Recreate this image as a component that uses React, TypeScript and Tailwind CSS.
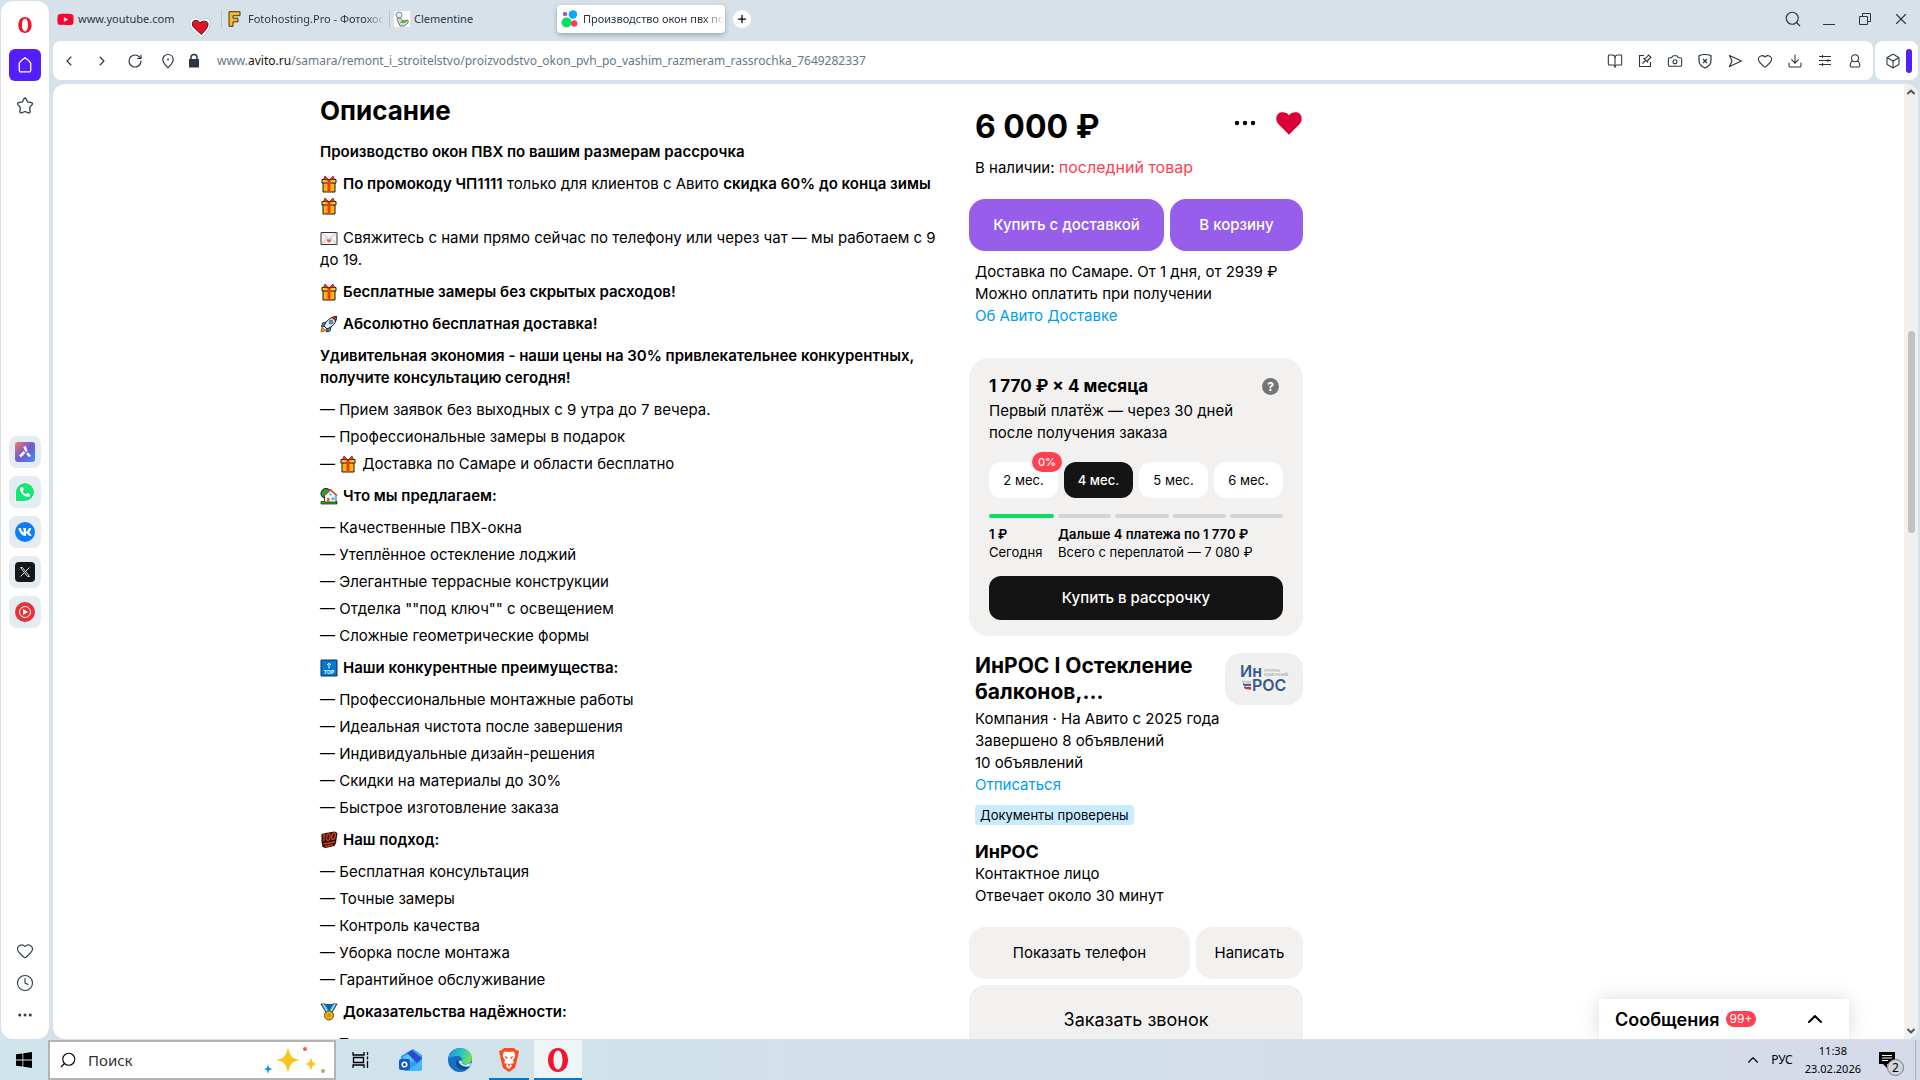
import type { ReactNode } from "react";
import { FaPhoneAlt, FaVk, FaYoutube } from "react-icons/fa";
import {
    BookOpen,
    Box,
    Camera,
    ChevronDown,
    ChevronLeft,
    ChevronRight,
    ChevronUp,
    Clock,
    Download,
    Ellipsis,
    Heart,
    Plus,
    RotateCw,
    Search,
    X,
} from "lucide-react";

const emojiClass = "mr-[5px] inline-block size-[18px] align-[-4px]";

function Gift() {
    return (
        <svg viewBox="0 0 18 18" className={emojiClass} role="img" aria-label="Подарок">
            <path d="M3 7h12v10H3z" fill="#fcb50d" stroke="#1a1a1a" />
            <path d="M2 4.500h14V8H2z" fill="#ffc83d" stroke="#1a1a1a" />
            <path d="M7.500 5h3v12h-3z" fill="#f03a17" />
            <path d="M9 5 5 1 3.500 4.500zM9 5l4-4 1.500 3.500z" fill="#f03a17" stroke="#7a1708" strokeWidth=".7" />
        </svg>
    );
}

function Letter() {
    return (
        <svg viewBox="0 0 18 18" className={emojiClass} role="img" aria-label="Письмо">
            <path d="M1 3.500h16v12H1z" fill="#f2f2f2" stroke="#333" />
            <path d="m1.500 4 7.500 6 7.500-6M1.500 15 7 9m9.500 6L11 9" fill="none" stroke="#c4c4c4" />
            <path d="M9 13.800c-4-2.500-1.500-4.500 0-3 1.500-1.500 4 .5 0 3z" fill="#f05a4a" />
        </svg>
    );
}

function Rocket() {
    return (
        <svg viewBox="0 0 18 18" className={emojiClass} role="img" aria-label="Ракета">
            <path d="M2 12.500 1 17l5-1.500z" fill="#f9a11b" stroke="#8a3a08" strokeWidth=".7" />
            <path d="M6 7 2.500 8 1.500 12l4-1zM11 12l-1 4-3.500 1 .5-4z" fill="#2d9fe0" stroke="#111" strokeWidth=".8" />
            <path d="M4 11c2-5 6-9 12.500-9.500C16.500 8 12 12 7 14z" fill="#e8eef2" stroke="#111" />
            <path d="M12 2.700c1.500-.8 3-1.100 4.500-1.200 0 1.500-.4 3-1 4.500z" fill="#e02a20" stroke="#111" strokeWidth=".6" />
            <circle cx="11" cy="7" r="1.900" fill="#45b8ef" stroke="#234" strokeWidth=".7" />
        </svg>
    );
}

function HouseTree() {
    return (
        <svg viewBox="0 0 18 18" className={emojiClass} role="img" aria-label="Дом">
            <circle cx="6" cy="6.500" r="5" fill="#16a637" stroke="#111" />
            <path d="M1 14.500h16v2.500H1z" fill="#16c60c" stroke="#111" strokeWidth=".7" />
            <path d="M4.500 8.500 10.500 3 16 8.500V15H4.500z" fill="#f3f3f3" stroke="#111" strokeWidth=".7" />
            <path d="m4 8.500 6.500-6 6.500 6" fill="none" stroke="#df3b2b" strokeWidth="1.200" />
            <path d="M7 11h2.500v4H7z" fill="#e4593b" />
            <path d="M11.500 10.500h3v2.500h-3zM9.500 6.500h2v2h-2z" fill="#42b8ef" />
        </svg>
    );
}

function TopArrow() {
    return (
        <svg viewBox="0 0 18 18" className={emojiClass} role="img" aria-label="TOP">
            <path d="M1 1h16v16H1z" fill="#0078d7" stroke="#10304e" />
            <path d="M9 9.500V4M7 6l2-2 2 2" fill="none" stroke="#fff" />
            <text x="9" y="15" fontSize="5" fontWeight="700" textAnchor="middle" fill="#fff">
                TOP
            </text>
        </svg>
    );
}

function Hundred() {
    return (
        <svg viewBox="0 0 18 18" className={emojiClass} role="img" aria-label="Сто баллов">
            <path d="m1.500 3 4-1 9-1.500 3 1.500-1.500 10-1.500 3-9 2-3-1-.5-3-.5-2z" fill="#251210" />
            <g fill="none" stroke="#e23b1c" strokeWidth="1.300">
                <path d="m3 5 1.500-1.500L3.700 10.500" />
                <ellipse cx="8.300" cy="6.200" rx="1.700" ry="3.300" transform="rotate(12 8.300 6.200)" />
                <ellipse cx="13.500" cy="5.200" rx="1.700" ry="3.300" transform="rotate(12 13.500 5.200)" />
                <path d="M3.500 13 15 11M5 15.300l8-1.500" />
            </g>
        </svg>
    );
}

function Medal() {
    return (
        <svg viewBox="0 0 18 18" className={emojiClass} role="img" aria-label="Медаль">
            <path d="M1 1h4.500L9 7l3.500-6H17l-5.500 9h-5z" fill="#31b5ef" stroke="#111" strokeWidth=".8" />
            <path d="M5.500 1h7L9 7z" fill="#0063b1" />
            <path d="m3 1 4.500 8M15 1l-4.500 8" stroke="#d6f0fb" />
            <circle cx="9" cy="12.500" r="4.500" fill="#f9b50d" stroke="#3b2a00" strokeWidth=".8" />
            <circle cx="9" cy="12.500" r="2.300" fill="#e09100" />
        </svg>
    );
}

function OperaLogo({ className }: { className: string }) {
    return (
        <svg viewBox="0 0 24 24" className={className} aria-hidden="true">
            <path
                fillRule="evenodd"
                fill="#f5152b"
                d="M12 0c6.200 0 10 5.400 10 12s-3.800 12-10 12S2 18.600 2 12 5.800 0 12 0zm0 2.600c-2.800 0-4.500 4-4.500 9.400s1.700 9.400 4.500 9.400 4.500-4 4.500-9.400-1.700-9.400-4.500-9.400z"
            />
        </svg>
    );
}

function AvitoLogo() {
    return (
        <svg viewBox="0 0 18 18" className="size-[18px] shrink-0" aria-hidden="true">
            <circle cx="5.500" cy="12.500" r="5" fill="#04e061" />
            <circle cx="12" cy="4.500" r="4.200" fill="#00aaff" />
            <circle cx="13.200" cy="13.500" r="3.200" fill="#ff4053" />
            <circle cx="4" cy="4" r="2.300" fill="#965eeb" />
        </svg>
    );
}

type Block = { icon: ReactNode; title: string; items: string[] };

const blocks: Block[] = [
    {
        icon: <HouseTree />,
        title: "Что мы предлагаем:",
        items: [
            "Качественные ПВХ-окна",
            "Утеплённое остекление лоджий",
            "Элегантные террасные конструкции",
            'Отделка ""под ключ"" с освещением',
            "Сложные геометрические формы",
        ],
    },
    {
        icon: <TopArrow />,
        title: "Наши конкурентные преимущества:",
        items: [
            "Профессиональные монтажные работы",
            "Идеальная чистота после завершения",
            "Индивидуальные дизайн-решения",
            "Скидки на материалы до 30%",
            "Быстрое изготовление заказа",
        ],
    },
    {
        icon: <Hundred />,
        title: "Наш подход:",
        items: [
            "Бесплатная консультация",
            "Точные замеры",
            "Контроль качества",
            "Уборка после монтажа",
            "Гарантийное обслуживание",
        ],
    },
    {
        icon: <Medal />,
        title: "Доказательства надёжности:",
        items: ["Тысячи довольных клиентов"],
    },
];

function Description() {
    return (
        <article className="flex flex-col gap-[10px] whitespace-nowrap pt-[10px] text-[15px] leading-[22px]">
            <h2 className="mb-[3px] text-[26px] font-bold leading-[34px]">Описание</h2>
            <p className="font-semibold">Производство окон ПВХ по вашим размерам рассрочка</p>
            <p>
                <Gift />
                <strong className="font-semibold">По промокоду ЧП1111</strong> только для клиентов с Авито{" "}
                <strong className="font-semibold">скидка 60% до конца зимы</strong>
                <br />
                <Gift />
            </p>
            <p>
                <Letter />
                Свяжитесь с нами прямо сейчас по телефону или через чат — мы работаем с 9<br />
                до 19.
            </p>
            <p className="font-semibold">
                <Gift />
                Бесплатные замеры без скрытых расходов!
            </p>
            <p className="font-semibold">
                <Rocket />
                Абсолютно бесплатная доставка!
            </p>
            <p className="font-semibold">
                Удивительная экономия - наши цены на 30% привлекательнее конкурентных,
                <br />
                получите консультацию сегодня!
            </p>
            <ul className="flex flex-col gap-[5px]">
                <li>— Прием заявок без выходных с 9 утра до 7 вечера.</li>
                <li>— Профессиональные замеры в подарок</li>
                <li>
                    — <Gift />
                    Доставка по Самаре и области бесплатно
                </li>
            </ul>
            {blocks.map((block) => (
                <section key={block.title} className="flex flex-col gap-[10px]">
                    <h3 className="font-semibold">
                        {block.icon}
                        {block.title}
                    </h3>
                    <ul className="flex flex-col gap-[5px]">
                        {block.items.map((item) => (
                            <li key={item}>— {item}</li>
                        ))}
                    </ul>
                </section>
            ))}
        </article>
    );
}

function Installments() {
    return (
        <section className="mt-[31px] rounded-[20px] bg-[#f2f1f0] px-5 pb-4 pt-4">
            <div className="flex items-center justify-between">
                <h3 className="text-[17px] font-bold leading-6">1 770 ₽ × 4 месяца</h3>
                <button
                    type="button"
                    aria-label="Подробнее"
                    className="mr-1 size-[17px] rounded-full bg-[#757575] text-[12px] font-bold leading-[17px] text-white"
                >
                    ?
                </button>
            </div>
            <p className="mt-[2px] text-[15px] leading-[22px]">
                Первый платёж — через 30 дней
                <br />
                после получения заказа
            </p>
            <div className="mt-[18px] grid grid-cols-4 gap-[6px] text-[13px]">
                <button type="button" className="relative h-9 rounded-xl bg-white">
                    2 мес.
                    <span className="absolute -right-1 -top-[10px] rounded-full bg-[#ff4053] px-[6px] text-[11px] font-medium leading-5 text-white">
                        0%
                    </span>
                </button>
                <button type="button" className="h-9 rounded-xl bg-[#141414] font-medium text-white">
                    4 мес.
                </button>
                <button type="button" className="h-9 rounded-xl bg-white">
                    5 мес.
                </button>
                <button type="button" className="h-9 rounded-xl bg-white">
                    6 мес.
                </button>
            </div>
            <div className="mt-4 flex gap-1">
                <span className="h-1 w-[65px] rounded-full bg-[#04e061]" />
                <span className="h-1 flex-1 rounded-full bg-[#d4d4d4]" />
                <span className="h-1 flex-1 rounded-full bg-[#d4d4d4]" />
                <span className="h-1 flex-1 rounded-full bg-[#d4d4d4]" />
                <span className="h-1 flex-1 rounded-full bg-[#d4d4d4]" />
            </div>
            <div className="mt-[7px] flex gap-1 text-[13px] leading-[18px]">
                <p className="w-[65px]">
                    <strong className="font-semibold">1 ₽</strong>
                    <br />
                    Сегодня
                </p>
                <p>
                    <strong className="font-semibold">Дальше 4 платежа по 1 770 ₽</strong>
                    <br />
                    Всего с переплатой — 7 080 ₽
                </p>
            </div>
            <button
                type="button"
                className="mt-[15px] h-11 w-full rounded-xl bg-[#141414] text-[15px] font-medium text-white"
            >
                Купить в рассрочку
            </button>
        </section>
    );
}

function SellerLogo() {
    return (
        <div className="flex h-[52px] w-[78px] items-center justify-center rounded-2xl bg-[#efefef]">
            <svg viewBox="0 0 52 30" className="h-[30px] w-[52px]" role="img" aria-label="ИнРОС">
                <path d="M2 0h48v30H2z" fill="#f1f1ee" />
                <text x="2" y="13" fontSize="16" fontWeight="600" fill="#35588f">
                    Ин
                </text>
                <text x="26" y="8" fontSize="4" fill="#8a8f96">
                    ГРУППА
                </text>
                <text x="26" y="12" fontSize="4" fill="#8a8f96">
                    КОМПАНИЙ
                </text>
                <text x="14" y="27" fontSize="16" fontWeight="600" fill="#35588f">
                    РОС
                </text>
                <path d="M4 16c3 2 6 0 9 1v2c-4-1-6 1-9-1z" fill="#c6ccd4" />
                <path d="M5 19c3 2 5 0 8 1v2c-3-1-5 1-8-1z" fill="#35588f" />
                <path d="M6 22c3 2 5 0 7 1v3c-2-1-5 0-7-2z" fill="#c23a45" />
            </svg>
        </div>
    );
}

function Purchase() {
    return (
        <aside className="text-[15px] leading-[22px]">
            <div className="flex items-center justify-between pl-[6px] pt-[22px]">
                <p className="text-[32px] font-bold leading-[42px]">6 000 ₽</p>
                <div className="mb-2 flex items-center gap-4">
                    <button type="button" aria-label="Ещё">
                        <svg viewBox="0 0 28 28" className="size-7">
                            <circle cx="6" cy="14" r="2.200" />
                            <circle cx="14" cy="14" r="2.200" />
                            <circle cx="22" cy="14" r="2.200" />
                        </svg>
                    </button>
                    <button type="button" aria-label="В избранном">
                        <svg viewBox="0 0 28 28" className="size-7" fill="#db0036">
                            <path d="M14 6.500C11.600 2.200 1.300 1.300 1.300 10c0 3 2 5 4 7l8.700 8.700L22.700 17c2-2 4-4 4-7 0-8.700-10.300-7.800-12.700-3.500z" />
                        </svg>
                    </button>
                </div>
            </div>
            <p className="mt-2 pl-[6px]">
                В наличии: <span className="text-base leading-[22px] text-[#ff4053]">последний товар</span>
            </p>
            <div className="mt-5 flex gap-[6px] font-medium text-white">
                <button type="button" className="h-[52px] w-[195px] rounded-2xl bg-[#965eeb]">
                    Купить с доставкой
                </button>
                <button type="button" className="h-[52px] flex-1 rounded-2xl bg-[#965eeb]">
                    В корзину
                </button>
            </div>
            <p className="mt-[10px] pl-[6px]">
                Доставка по Самаре. От 1 дня, от 2939 ₽
                <br />
                Можно оплатить при получении
                <br />
                <a href="#delivery" className="text-[#009cf0]">
                    Об Авито Доставке
                </a>
            </p>
            <Installments />
            <div className="mt-[17px] flex items-start justify-between pl-[6px]">
                <h2 className="w-[230px] text-[21px] font-bold leading-[26px]">ИнРОС I Остекление балконов,…</h2>
                <SellerLogo />
            </div>
            <p className="mt-[3px] pl-[6px]">
                Компания · На Авито с 2025 года
                <br />
                Завершено 8 объявлений
                <br />
                10 объявлений
                <br />
                <a href="#unsubscribe" className="text-[#009cf0]">
                    Отписаться
                </a>
            </p>
            <p className="ml-[6px] mt-[9px] w-fit rounded bg-[#c9ebff] px-[5px] text-[13px] leading-5">
                Документы проверены
            </p>
            <h3 className="mt-4 pl-[6px] text-[18px] font-bold leading-[22px]">ИнРОС</h3>
            <p className="pl-[6px]">
                Контактное лицо
                <br />
                Отвечает около 30 минут
            </p>
            <div className="mt-5 flex gap-[6px] text-[15px]">
                <button type="button" className="h-[52px] w-[221px] rounded-2xl bg-[#f2f1f0]">
                    Показать телефон
                </button>
                <button type="button" className="h-[52px] flex-1 rounded-2xl bg-[#f2f1f0]">
                    Написать
                </button>
            </div>
            <button type="button" className="mt-[6px] h-[70px] w-full rounded-2xl bg-[#f2f1f0] text-[18px]">
                Заказать звонок
            </button>
        </aside>
    );
}

function SidebarApp({ label, children }: { label: string; children: ReactNode }) {
    return (
        <button
            type="button"
            aria-label={label}
            className="flex size-8 items-center justify-center rounded-lg bg-[#e4ebf1]"
        >
            {children}
        </button>
    );
}

function Sidebar() {
    return (
        <nav className="ml-px mr-1 mt-px flex w-12 shrink-0 flex-col items-center rounded-xl bg-white text-[#2e3b47]">
            <OperaLogo className="mt-4 size-4" />
            <button
                type="button"
                aria-label="Экспресс-панель"
                className="mt-4 flex size-8 items-center justify-center rounded-md bg-[#541fff] text-white"
            >
                <svg viewBox="0 0 16 16" className="size-4" fill="none" stroke="currentColor" strokeWidth="1.300">
                    <path d="M8 .8c2 1.300 4 3 5.700 5.200v7.500q0 1.300-1.300 1.300H3.600q-1.300 0-1.300-1.300V6C4 3.800 6 2.100 8 .8z" />
                </svg>
            </button>
            <button type="button" aria-label="Закладки" className="mt-4">
                <svg viewBox="0 0 18 18" className="size-[18px]" fill="none" stroke="currentColor" strokeWidth="1.300">
                    <path
                        strokeLinejoin="round"
                        d="M8 1.800q1-1.600 2 0l1.600 3 3.900.9q1.600.6.600 1.900l-2.400 2.800.4 4.200q-.1 1.700-1.700 1.200L9 14.500l-3.400 1.300q-1.600.5-1.700-1.200l.4-4.200-2.400-2.800q-1-1.300.6-1.900l3.900-.9z"
                    />
                </svg>
            </button>
            <div className="mt-[321px] flex flex-col gap-2">
                <SidebarApp label="Aria">
                    <svg viewBox="0 0 20 20" className="size-5">
                        <defs>
                            <linearGradient id="aria" x1="0" y1="0" x2="1" y2="1">
                                <stop offset="0" stopColor="#f47b57" />
                                <stop offset=".5" stopColor="#7058d8" />
                                <stop offset="1" stopColor="#3b91e8" />
                            </linearGradient>
                        </defs>
                        <rect width="20" height="20" rx="3" fill="url(#aria)" />
                        <path d="M5 14.500 9.500 10M9.500 4.500l2 5m.5 1.500 3 3.500" stroke="#fff" strokeWidth="2.500" />
                    </svg>
                </SidebarApp>
                <SidebarApp label="WhatsApp">
                    <span className="flex size-5 items-center justify-center rounded-full rounded-bl-sm border border-white bg-[#12e676]">
                        <FaPhoneAlt size={10} color="#fff" />
                    </span>
                </SidebarApp>
                <SidebarApp label="ВКонтакте">
                    <span className="flex size-5 items-center justify-center rounded-full bg-[#0a7cff]">
                        <FaVk size={14} color="#fff" />
                    </span>
                </SidebarApp>
                <SidebarApp label="X">
                    <svg viewBox="0 0 20 20" className="size-5">
                        <rect width="20" height="20" rx="4" fill="#14181b" />
                        <path d="M5.500 5.500h2l7 9h-2zM14.500 5.500l-9 9" fill="none" stroke="#d8dcdf" />
                    </svg>
                </SidebarApp>
                <SidebarApp label="YouTube Music">
                    <svg viewBox="0 0 20 20" className="size-5">
                        <circle cx="10" cy="10" r="10" fill="#e53238" />
                        <circle cx="10" cy="10" r="5.500" fill="none" stroke="#fff" />
                        <path d="m8 7 5 3-5 3z" fill="#fff" />
                    </svg>
                </SidebarApp>
            </div>
            <div className="mb-[15px] mt-auto flex flex-col items-center gap-[14px]">
                <Heart size={18} strokeWidth={1.5} />
                <Clock size={18} strokeWidth={1.5} />
                <Ellipsis size={18} strokeWidth={2} />
            </div>
        </nav>
    );
}

function TabBar() {
    return (
        <header className="flex h-[41px] items-start text-[11px] text-[#2a3641]">
            <div className="relative mt-[5px] flex h-7 w-[168px] items-center gap-1 pl-1">
                <FaYoutube size={17} color="#ff0033" />
                www.youtube.com
                <svg viewBox="0 0 24 24" className="absolute right-2 top-[11px] size-6">
                    <path
                        d="M3 2.500c3-2.500 7-.5 8.500 1.500 4-3 9-1.500 10 2 1 5-5 12-8.500 16.500-4-4-8-6-11-10.500C0 8 .5 4.500 3 2.500z"
                        fill="#fff"
                        stroke="#c5c9cd"
                    />
                    <path
                        d="M4 5.500c2-2 6-1 7 1.500 2.500-3 7.500-2 8 .5.500 4-4 8-6.500 11-3-3-6-5-8.500-8-.8-2-1-3.500 0-5z"
                        fill="#e3142a"
                        stroke="#4c0a10"
                    />
                </svg>
            </div>
            <div className="mt-[5px] flex h-7 w-[168px] items-center gap-[5px] pr-1">
                <span className="h-[18px] w-px bg-[#bcc7d0]" />
                <svg viewBox="0 0 16 16" className="size-4 shrink-0">
                    <path d="M2 .7h11v4H6v2.500h5v3.600H6v4.500H2z" fill="#fbb829" stroke="#4a3208" />
                </svg>
                <span className="flex-1 overflow-hidden whitespace-nowrap [mask-image:linear-gradient(to_right,black_85%,transparent)]">
                    Fotohosting.Pro - Фотохостинг
                </span>
            </div>
            <div className="mt-[5px] flex h-7 w-[168px] items-center gap-1">
                <span className="h-[18px] w-px bg-[#bcc7d0]" />
                <svg viewBox="0 0 16 16" className="size-4 shrink-0">
                    <path d="M0 0h16v16H0z" fill="#fff" />
                    <circle cx="5" cy="4" r="3" fill="#e7e7ef" stroke="#8b8798" />
                    <path d="M3 8c2-2 5 0 6 2l5-1v3l-4 3H6z" fill="#d9ddd2" stroke="#6f7a68" />
                    <path d="m8 9 5 1-2 2H6z" fill="#57b847" />
                </svg>
                Clementine
            </div>
            <div className="mt-[5px] flex h-7 w-[168px] items-center gap-1 rounded bg-white pl-1 shadow-[0_2px_5px_rgba(60,80,100,0.4)]">
                <AvitoLogo />
                <span className="flex-1 overflow-hidden whitespace-nowrap [mask-image:linear-gradient(to_right,black_85%,transparent)]">
                    Производство окон пвх по вашим
                </span>
            </div>
            <button
                type="button"
                aria-label="Новая вкладка"
                className="ml-2 mt-[10px] flex size-[18px] items-center justify-center rounded-full bg-white text-black"
            >
                <Plus size={12} strokeWidth={2.5} />
            </button>
            <div className="ml-auto mr-[10px] mt-[10px] flex gap-[18px] text-[#333]">
                <Search size={18} strokeWidth={1.5} />
                <svg viewBox="0 0 18 18" className="size-[18px]" stroke="currentColor">
                    <path d="M3 14.500h12" />
                </svg>
                <svg viewBox="0 0 18 18" className="size-[18px]" fill="none" stroke="currentColor">
                    <path d="M3.500 6.500h8v8h-8zM6.500 6.500v-3h8v8h-3" />
                </svg>
                <X size={18} strokeWidth={1.5} />
            </div>
        </header>
    );
}

function AddressBar() {
    return (
        <div className="mr-[2px] flex h-[39px] gap-[2px] text-[#2a3641]">
            <div className="flex flex-1 items-center rounded-lg bg-white pl-2 pr-[10px]">
                <div className="flex gap-[17px]">
                    <ChevronLeft size={16} strokeWidth={1.7} />
                    <ChevronRight size={16} strokeWidth={1.7} />
                    <RotateCw size={16} strokeWidth={1.7} />
                    <svg viewBox="0 0 16 16" className="size-4" fill="none" stroke="currentColor" strokeWidth="1.200">
                        <path d="M8 1.500c3 0 5.200 2.200 5.200 5 0 3.500-3 6-5.200 8.300-2.200-2.300-5.200-4.800-5.200-8.300 0-2.800 2.200-5 5.200-5z" />
                        <circle cx="8" cy="6.500" r="1" fill="currentColor" stroke="none" />
                    </svg>
                </div>
                <svg viewBox="0 0 16 16" className="ml-[10px] size-4" fill="currentColor">
                    <path d="M3 6h10v8.500H3z" />
                    <path d="M5 7V4.500a3 3 0 0 1 6 0V7" fill="none" stroke="currentColor" strokeWidth="1.500" />
                </svg>
                <p className="ml-[15px] flex-1 text-[12px] text-[#667885]">
                    www.<span className="text-[#111]">avito.ru</span>
                    /samara/remont_i_stroitelstvo/proizvodstvo_okon_pvh_po_vashim_razmeram_rassrochka_7649282337
                </p>
                <div className="flex gap-[14px]">
                    <BookOpen size={16} strokeWidth={1.6} />
                    <svg viewBox="0 0 16 16" className="size-4" fill="none" stroke="currentColor" strokeWidth="1.100">
                        <path d="M7 2.500H2.500v11h11V9M5.500 10.500l3-3M7 5.500 10.500 9l.7-2.300 2.800-2.200-2.500-2.500-2.200 2.800z" />
                    </svg>
                    <Camera size={16} strokeWidth={1.6} />
                    <svg viewBox="0 0 16 16" className="size-4" fill="none" stroke="currentColor" strokeWidth="1.200">
                        <path d="M8 1.500c2 0 4 .3 6 1.300v4.700c0 4-2.500 6-6 7.500-3.500-1.500-6-3.500-6-7.500V2.800c2-1 4-1.300 6-1.300z" />
                        <path d="m6 6 4 4m0-4-4 4" />
                    </svg>
                    <svg viewBox="0 0 16 16" className="size-4" fill="none" stroke="currentColor" strokeWidth="1.200">
                        <path strokeLinejoin="round" d="m2.500 2.500 12 5.500-12 5.500L5 8z" />
                    </svg>
                    <Heart size={16} strokeWidth={1.6} />
                    <Download size={16} strokeWidth={1.6} />
                    <svg viewBox="0 0 16 16" className="size-4" fill="none" stroke="currentColor" strokeWidth="1.100">
                        <path d="M2 3.500h12M2 7.500h12M2 11.500h12M5.500 2v3M11 6v3M5.500 10v3" />
                    </svg>
                    <svg viewBox="0 0 16 16" className="size-4" fill="none" stroke="currentColor" strokeWidth="1.100">
                        <circle cx="8" cy="5.200" r="3.500" />
                        <path d="M5.500 8c-2.300 1-3 5-1.500 6h8c1.500-1 .8-5-1.500-6" />
                    </svg>
                </div>
            </div>
            <div className="flex w-[43px] items-center justify-between rounded-lg bg-white pl-[10px] pr-[6px]">
                <Box size={16} strokeWidth={1.6} />
                <span className="h-6 w-[6px] rounded-full bg-[#541fff]" />
            </div>
        </div>
    );
}

function Taskbar() {
    return (
        <footer className="flex h-10 shrink-0 items-center bg-linear-to-r from-[#cfe5ec] to-[#d5dae8] text-black">
            <button type="button" aria-label="Пуск" className="flex h-10 w-12 items-center justify-center">
                <svg viewBox="0 0 16 16" className="size-4">
                    <path d="m0 2.300 6.500-.9v6.200H0zM7.300 1.300 16 0v7.600H7.300zM0 8.400h6.500v6.200L0 13.700zM7.300 8.400H16V16l-8.700-1.200z" />
                </svg>
            </button>
            <label className="flex h-10 w-72 items-center border-2 border-[#b3b3b3] bg-white pl-[9px] pr-2">
                <Search size={18} strokeWidth={1.5} className="-scale-x-100" />
                <input
                    type="text"
                    placeholder="Поиск"
                    aria-label="Поиск"
                    className="ml-[11px] min-w-0 flex-1 bg-transparent text-[15px] outline-none placeholder:text-[#333]"
                />
                <svg viewBox="0 0 62 28" className="h-7 w-[62px]">
                    <path d="M24 1c2 9 3 11 12 13-9 2-10 4-12 13-2-9-3-11-12-13C21 12 22 10 24 1z" fill="#fcc419" />
                    <path d="M47 11c1 5 2 6 6 7-4 1-5 2-6 7-1-5-2-6-6-7 4-1 5-2 6-7z" fill="#fcc419" />
                    <path d="M4 18c1 4 1 4 5 5-4 1-4 1-5 5-1-4-1-4-4-5 3-1 3-1 4-5z" fill="#0f9bf0" />
                    <circle cx="41" cy="3" r="2" fill="#f0642d" />
                    <circle cx="59" cy="25" r="2" fill="#8bc540" />
                </svg>
            </label>
            <div className="flex h-10 w-[50px] items-center justify-center">
                <svg viewBox="0 0 18 18" className="size-[18px]" fill="none" stroke="#000" strokeWidth="1.300">
                    <path d="M1 1v3h11V1M1.500 6.500h10v5h-10zM1 17v-3h11v3M15.500 1v3m0 6v7M15.500 5.500v3" />
                </svg>
            </div>
            <div className="flex h-10 w-[50px] items-center justify-center">
                <svg viewBox="0 0 24 24" className="size-6">
                    <path d="m2 8 12-7 9 6v13q0 3-3 3H6L2 20z" fill="#2f9df4" />
                    <path d="m4 9 11-6 7 5-15 9z" fill="#5ac3fa" />
                    <path d="m8 5 5-3 10 8-5 5z" fill="#2a49cf" />
                    <path d="M8 23 23 12v8q0 3-3 3z" fill="#43b7fb" />
                    <rect x="0" y="11" width="11" height="11" rx="2" fill="#1359c4" />
                    <circle cx="5.500" cy="16.500" r="2.300" fill="none" stroke="#fff" strokeWidth="1.500" />
                </svg>
            </div>
            <div className="flex h-10 w-12 items-center justify-center">
                <svg viewBox="0 0 24 24" className="size-6">
                    <defs>
                        <linearGradient id="edge" x1="0" y1="0" x2="1" y2=".3">
                            <stop offset="0" stopColor="#1c8bd8" />
                            <stop offset=".6" stopColor="#2fc4c8" />
                            <stop offset="1" stopColor="#6be05a" />
                        </linearGradient>
                    </defs>
                    <circle cx="12" cy="12" r="12" fill="#1570c4" />
                    <path
                        d="M0 12C0 5 5 0 12 0s12 5 12 10c0 4-3 6-6 6-4 0-5-1.500-4-3 1-2-1-5-4-5-5 0-10 2-10 4z"
                        fill="url(#edge)"
                    />
                    <path d="M9 11c-3 6 2 12 9 10 2-1 4-3 4-3-8 2-12-1-13-7z" fill="#0d4b8c" />
                    <path d="M14 12.500c-1 2 0 4 4 4l5-1.500-.5 3C17 20 11 17 11 13z" fill="#d0e5ec" />
                </svg>
            </div>
            <div className="flex h-10 w-[50px] flex-col items-center">
                <svg viewBox="0 0 20 24" className="mt-2 h-6 w-5">
                    <path d="m5 0-2 2-3 1 1 5 3 12 6 4 6-4 3-12 1-5-3-1-2-2z" fill="#fb4b1e" />
                    <path d="M10 4 5 3.500 3.500 8l2.500 4-1 3 3 1-1 2 3 3 3-3-1-2 3-1-1-3 2.500-4L15 3.500z" fill="#fff" />
                    <path d="m5.500 8 3 1-.5 2.500zM14.500 8l-3 1 .5 2.500zM8 15l2 1.500 2-1.500-2 4z" fill="#fb4b1e" />
                </svg>
                <span className="mt-auto h-[2px] w-10 bg-[#0078d7]" />
            </div>
            <div className="flex h-10 w-12 flex-col items-center bg-[#edf5f8]">
                <OperaLogo className="mt-2 size-6" />
                <span className="mt-auto h-[2px] w-full bg-[#0078d7]" />
            </div>
            <div className="ml-auto flex h-10 items-center">
                <ChevronUp size={18} strokeWidth={1.5} />
                <span className="ml-[9px] text-[12px]">РУС</span>
                <p className="ml-3 text-center text-[11px] leading-[18px]">
                    11:38
                    <br />
                    23.02.2026
                </p>
                <div className="relative ml-[17px] mr-[13px] size-6">
                    <svg viewBox="0 0 24 24" className="size-6">
                        <path d="M1 4h16v12H9v4l-4-4H1z" />
                        <path d="M4 7.500h10M4 10h10M4 12.500h6" stroke="#fff" />
                    </svg>
                    <span className="absolute -bottom-1 -right-[2px] size-[17px] rounded-full border border-[#777] bg-[#d0d4dc] text-center text-[12px] leading-[15px]">
                        2
                    </span>
                </div>
                <span className="mr-1 h-10 w-px bg-[#a9b0bd]" />
            </div>
        </footer>
    );
}

function App() {
    return (
        <div className="flex h-screen flex-col overflow-hidden bg-[#d7e1e9] font-['Noto_Sans',sans-serif]">
            <div className="mb-px flex min-h-0 flex-1">
                <Sidebar />
                <div className="flex min-w-0 flex-1 flex-col">
                    <TabBar />
                    <AddressBar />
                    <div className="relative mr-[2px] mt-1 flex min-h-0 flex-1 overflow-hidden rounded-xl bg-white font-['Inter',sans-serif] text-black">
                        <main className="grid flex-1 grid-cols-[600px_334px] gap-x-[49px] overflow-hidden pl-[267px]">
                            <Description />
                            <Purchase />
                        </main>
                        <div className="flex w-[14px] flex-col items-center bg-[#f0f0f0] py-[2px] text-[#555]">
                            <ChevronUp size={12} strokeWidth={4} />
                            <div className="mb-auto mt-[233px] h-[202px] w-[7px] rounded-full bg-[#c1c1c1]" />
                            <ChevronDown size={12} strokeWidth={4} />
                        </div>
                        <button
                            type="button"
                            className="absolute bottom-0 right-[69px] flex h-10 w-[250px] items-center rounded-t bg-white px-4 shadow-[0_0_20px_rgba(0,0,0,0.15)]"
                        >
                            <span className="text-[18px] font-semibold">Сообщения</span>
                            <span className="ml-[6px] rounded-full bg-[#ff4053] px-1 text-[12px] leading-4 text-white">
                                99+
                            </span>
                            <ChevronUp size={24} strokeWidth={2} className="ml-auto mr-[6px]" />
                        </button>
                    </div>
                </div>
            </div>
            <Taskbar />
        </div>
    );
}

export default App;
